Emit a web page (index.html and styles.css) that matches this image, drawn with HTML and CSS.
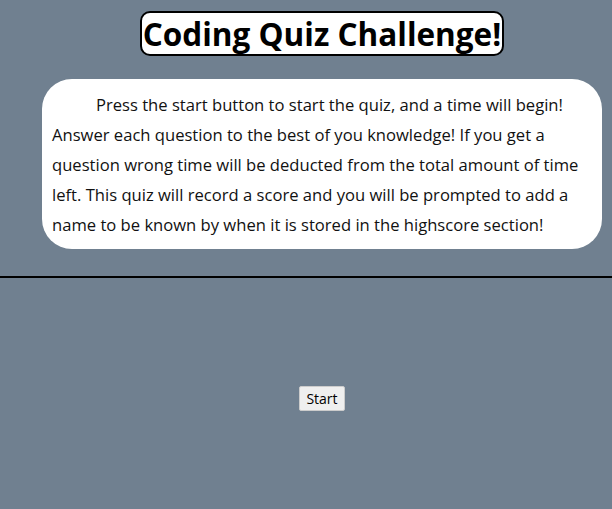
FILE: index.html
```html
<!DOCTYPE html>
<html>
<head>
<meta charset="utf-8">
<link rel="stylesheet" href="styles.css">
</head>
<body>
<header class="intro">
  <h1 class="title">Coding Quiz Challenge!</h1>
  <p class="rules">Press the start button to start the quiz, and a time will begin! Answer each question to the best of you knowledge! If you get a question wrong time will be deducted from the total amount of time left. This quiz will record a score and you will be prompted to add a name to be known by when it is stored in the highscore section!</p>
</header>
<main class="stage">
  <button class="start">Start</button>
</main>
</body>
</html>
```
FILE: styles.css
```css
html, body {
  margin: 0;
  padding: 0;
  background: #708090;
  font-family: "Open Sans", "Noto Sans", sans-serif;
  color: #000;
}
body {
  height: 509px;
  overflow: hidden;
}
.intro {
  display: flex;
  flex-direction: column;
  align-items: center;
  padding: 11px 10px 27px 42px;
  border-bottom: 2px solid #000;
}
.title {
  margin: 0;
  background: #fff;
  border: 2px solid #000;
  border-radius: 10px;
  font-size: 31.5px;
  font-weight: bold;
  line-height: 41px;
  padding: 0 1px;
}
.rules {
  margin: 23px 0 0 0;
  background: #fff;
  border-radius: 30px;
  padding: 11px 14px 9px 10px;
  width: 536px;
  font-size: 16.6px;
  line-height: 30px;
  text-indent: 44px;
  color: #111;
}
.stage {
  display: flex;
  justify-content: center;
  padding-top: 108px;
  padding-left: 32px;
}
.start {
  font-family: "Open Sans", sans-serif;
  font-size: 14px;
  padding: 1px 6px;
  height: 25px;
  background: #efefef;
  border: 1px solid #ccc;
  border-radius: 2px;
  color: #000;
}
```
